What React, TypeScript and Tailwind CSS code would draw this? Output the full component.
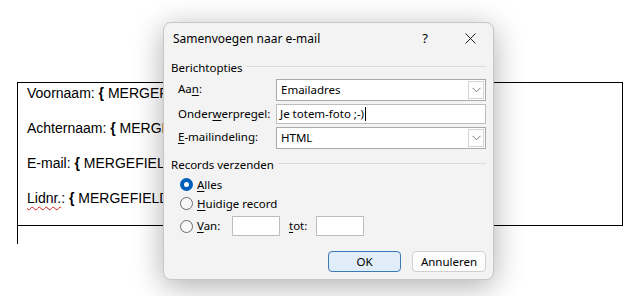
import React from "react";

function Chevron() {
  return (
    <svg width="9" height="6" viewBox="0 0 9 6" fill="none">
      <path d="M0.5 0.8 L4.5 4.8 L8.5 0.8" stroke="#7a7a7a" strokeWidth="1" />
    </svg>
  );
}

function Combo({ value }: { value: string }) {
  return (
    <div className="flex h-[22px] items-stretch border border-[#a9a9a9] bg-white">
      <div className="flex flex-1 items-center pl-[4px]">{value}</div>
      <div className="m-[1px] flex w-[16px] items-center justify-center border border-[#d4d4d4] bg-[#fdfdfd]">
        <Chevron />
      </div>
    </div>
  );
}

function GroupHeader({ title }: { title: string }) {
  return (
    <div className="flex h-[16px] items-center">
      <span className="leading-none">{title}</span>
      <div className="ml-[4px] mt-[-3px] h-px flex-1 bg-[#dadada]" />
    </div>
  );
}

function Radio({ checked }: { checked?: boolean }) {
  if (checked) {
    return (
      <div className="flex h-[13px] w-[13px] items-center justify-center rounded-full bg-[#005fb8]">
        <div className="h-[5px] w-[5px] rounded-full bg-white" />
      </div>
    );
  }
  return <div className="h-[13px] w-[13px] rounded-full border border-[#6a6a6a] bg-[#f8f8f8]" />;
}

export default function App() {
  return (
    <div className="relative h-[296px] w-[638px] overflow-hidden bg-white font-['Liberation_Sans',Arial,sans-serif] text-black">
      {/* Document behind the dialog */}
      <div className="ml-[17px] mt-[82px] flex h-[144px] w-[606px] flex-col gap-[15px] border border-black pl-[9px] text-[14px] leading-[20px]">
        <div className="whitespace-nowrap">
          Voornaam: <b>{"{"}</b> MERGEFIELD Voornaam <b>{"}"}</b>
        </div>
        <div className="whitespace-nowrap">
          Achternaam: <b>{"{"}</b> MERGEFIELD Achternaam <b>{"}"}</b>
        </div>
        <div className="whitespace-nowrap">
          E-mail: <b>{"{"}</b> MERGEFIELD Emailadres <b>{"}"}</b>
        </div>
        <div className="whitespace-nowrap">
          <span className="underline decoration-[#d42020] decoration-wavy decoration-1 underline-offset-[3px]">Lidnr.</span>: <b>{"{"}</b> MERGEFIELD Lidnr <b>{"}"}</b>
        </div>
      </div>
      <div className="ml-[17px] h-[18px] w-px bg-black" />

      {/* Dialog */}
      <div className="absolute left-[163px] top-[22px] flex h-[258px] w-[331px] flex-col rounded-[8px] border border-[#c6c6c6] bg-[#f3f3f3] font-['Noto_Sans','Open_Sans',sans-serif] text-[11.5px] shadow-[0_6px_30px_rgba(0,0,0,0.32)]">
        <div className="flex h-[31px] shrink-0 items-center pl-[9px]">
          <span className="flex-1 text-[12px]">Samenvoegen naar e-mail</span>
          <span className="mr-[37px] text-[13px]">?</span>
          <svg width="11" height="11" viewBox="0 0 11 11" className="mr-[17px]">
            <path d="M0.5 0.5 L10.5 10.5 M10.5 0.5 L0.5 10.5" stroke="#222" strokeWidth="1" />
          </svg>
        </div>

        <div className="flex flex-1 flex-col px-[7px]">
          <div className="mt-[6px]">
            <GroupHeader title="Berichtopties" />
          </div>

          <div className="mt-[3px] grid grid-cols-[98px_1fr] gap-y-[3px] pl-[7px]">
            <div className="pt-[1px]">
              Aa<span className="underline underline-offset-2">n</span>:
            </div>
            <Combo value="Emailadres" />
            <div className="flex items-center">
              <span>
                Onder<span className="underline underline-offset-2">w</span>erpregel:
              </span>
            </div>
            <div className="flex h-[20px] items-center border border-[#bdbdbd] bg-white pl-[3px]">
              Je totem-foto ;-)
              <div className="ml-px h-[14px] w-px bg-black" />
            </div>
            <div className="pt-[1px]">
              <span className="underline underline-offset-2">E</span>-mailindeling:
            </div>
            <Combo value="HTML" />
          </div>

          <div className="mt-[8px]">
            <GroupHeader title="Records verzenden" />
          </div>

          <div className="mt-[2px] flex flex-col pl-[9px]">
            <div className="flex h-[19px] items-center gap-[4px]">
              <Radio checked />
              <span>
                <span className="underline underline-offset-2">A</span>lles
              </span>
            </div>
            <div className="flex h-[19px] items-center gap-[4px]">
              <Radio />
              <span>
                <span className="underline underline-offset-2">H</span>uidige record
              </span>
            </div>
            <div className="mt-[3px] flex h-[20px] items-center">
              <Radio />
              <span className="ml-[4px] w-[35px]">
                <span className="underline underline-offset-2">V</span>an:
              </span>
              <div className="h-[20px] w-[48px] border border-[#bdbdbd] bg-white" />
              <span className="ml-[9px] w-[27px]">
                <span className="underline underline-offset-2">t</span>ot:
              </span>
              <div className="h-[20px] w-[48px] border border-[#bdbdbd] bg-white" />
            </div>
          </div>

          <div className="mt-auto mb-[7px] flex justify-end gap-[11px]">
            <button className="flex h-[21px] w-[73px] items-center justify-center rounded-[4px] border border-[#3a78b8] bg-[#e1edf8]">
              OK
            </button>
            <button className="flex h-[21px] w-[74px] items-center justify-center rounded-[4px] border border-[#d0d0d0] bg-[#fdfdfd]">
              Annuleren
            </button>
          </div>
        </div>
      </div>
    </div>
  );
}
